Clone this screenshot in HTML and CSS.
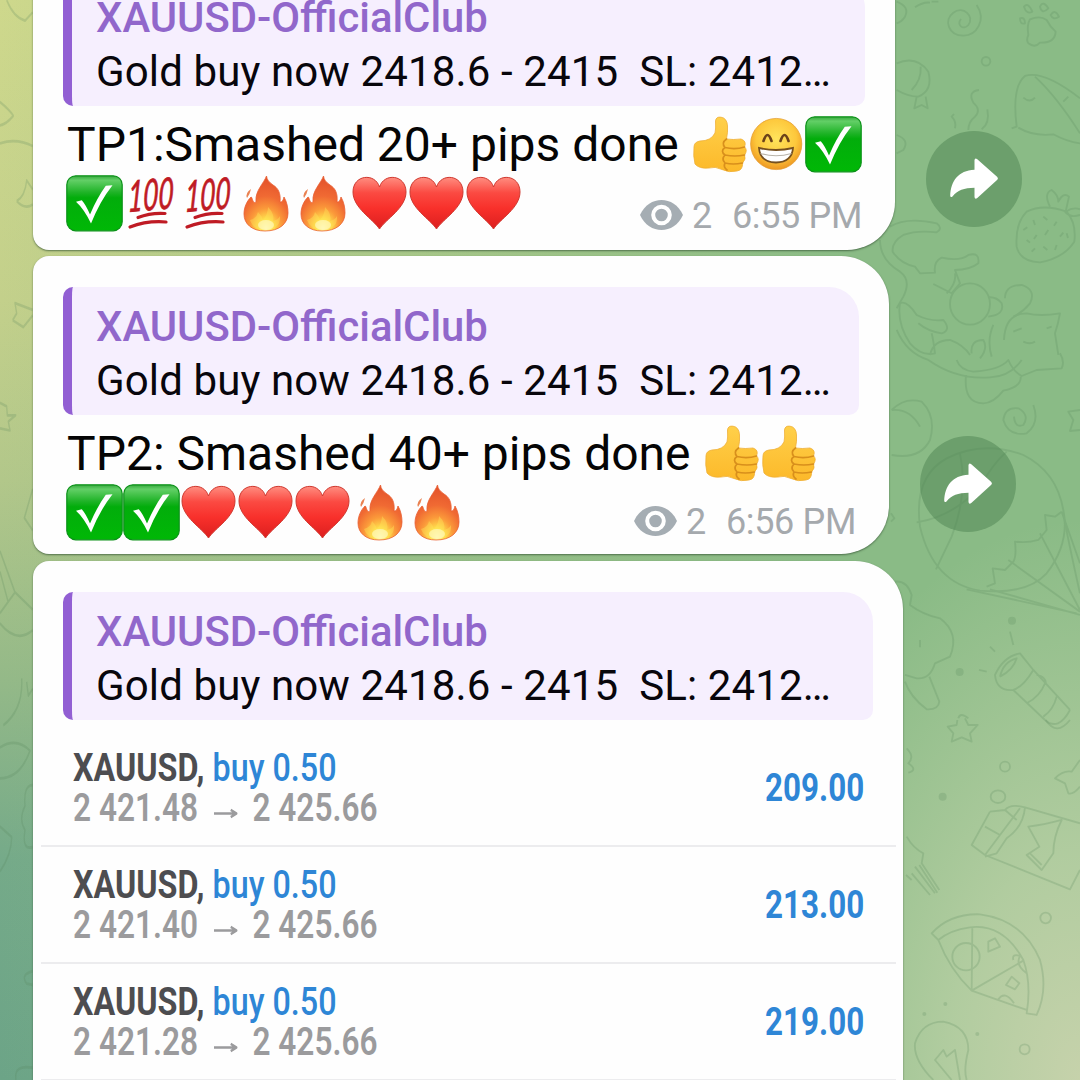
FILE: index.html
```html
<!DOCTYPE html>
<html lang="en">

<head>
    <meta charset="UTF-8">
    <title>XAUUSD-OfficialClub</title>
    <link rel="stylesheet" href="styles.css">
</head>

<body>
<!-- shared shapes -->
<svg class="defs" width="0" height="0">
    <defs>
        <linearGradient id="gCheck" x1="0" y1="0" x2="0" y2="1">
            <stop offset="0" stop-color="#36a83d"/>
            <stop offset=".08" stop-color="#63cf67"/>
            <stop offset=".3" stop-color="#1fb327"/>
            <stop offset=".4" stop-color="#02ad0b"/>
            <stop offset="1" stop-color="#00b806"/>
        </linearGradient>
        <linearGradient id="gHeart" x1="0" y1="0" x2="0" y2="1">
            <stop offset="0" stop-color="#ff8d80"/>
            <stop offset=".3" stop-color="#fb4a42"/>
            <stop offset=".6" stop-color="#f8302b"/>
            <stop offset="1" stop-color="#dc1f1f"/>
        </linearGradient>
        <radialGradient id="gFire" cx=".5" cy=".95" r=".9">
            <stop offset="0" stop-color="#fffbb0"/>
            <stop offset=".18" stop-color="#ffe14d"/>
            <stop offset=".4" stop-color="#fb9a3a"/>
            <stop offset=".65" stop-color="#f06a33"/>
            <stop offset="1" stop-color="#e4532b"/>
        </radialGradient>
        <linearGradient id="gThumb" x1="0" y1="0" x2="0" y2="1">
            <stop offset="0" stop-color="#ffd04a"/>
            <stop offset="1" stop-color="#fcb92a"/>
        </linearGradient>
        <radialGradient id="gFace" cx=".5" cy=".4" r=".6">
            <stop offset="0" stop-color="#ffe45c"/>
            <stop offset=".65" stop-color="#fdc83c"/>
            <stop offset="1" stop-color="#ee9722"/>
        </radialGradient>
    </defs>
    <symbol id="check" viewBox="0 0 57 57">
        <rect x=".8" y=".8" width="55.4" height="55" rx="9" fill="url(#gCheck)" stroke="#0c9219" stroke-width="1.2"/>
        <path d="M10 26.8L15.8 25.2Q20 30 24 39.5Q31 23 39.8 10.8L46.500 10.2Q34 26 25 48.500Q18 34 10 26.8Z" fill="#fff"/>
    </symbol>
    <symbol id="heart" viewBox="0 0 57 57">
        <path d="M28.5 54C22 44 2 33 2 17C2 -.5 24 -2.500 28.500 12C33 -2.500 55 -.5 55 17C55 33 35 44 28.500 54Z" fill="url(#gHeart)" stroke="#cf3930" stroke-width="1"/>
    </symbol>
    <symbol id="fire" viewBox="0 0 57 57">
        <path d="M29.500 1C27 8 18 16 19 26C19 28 17 28 16 26C15 24 15 22 14 22C10 26 7 32 7 39C7 49 15 56 28 56C42 56 51 49 51 38C51 33 50 27 47 22C46 26 45 27 43 27C44 18 41 13 36 10C32 7 30 5 29.500 1Z" fill="url(#gFire)" stroke="#e95f32" stroke-width=".8"/>
        <path d="M10 23Q8 18 14 14Q13 19 10 23Z" fill="#e98252"/>
        <path d="M13 45Q20 43 21 37Q25 41 26 45Q31 39 31 32Q38 39 36 46Q41 45 43 41Q44 54 29 55Q16 55 13 45Z" fill="#ffe75a" opacity=".4"/>
        <ellipse cx="29" cy="50" rx="8" ry="5" fill="#fffcd0" opacity=".6"/>
    </symbol>
    <symbol id="hundred" viewBox="0 0 57 57">
        <text class="hundred-text" x="8" y="35" textLength="46" lengthAdjust="spacingAndGlyphs" transform="rotate(-5 28 28) skewX(-7)">100</text>
        <path d="M15 42.500Q28 37.500 42 38.500" fill="none" stroke="#bf1b24" stroke-width="3.200" stroke-linecap="round"/>
        <path d="M7 52Q24 45.500 43 47" fill="none" stroke="#bf1b24" stroke-width="3.200" stroke-linecap="round"/>
    </symbol>
    <symbol id="thumb" viewBox="0 0 57 57">
        <path d="M3 31Q3 26 9 25Q20 25 24 17Q25 13 24.500 5Q25 .5 30 1.200Q36 2 36.500 10Q37 16 35.500 23Q42 24 50 23Q56 25 53.500 31Q57 34 53.500 39Q55.500 43 51.500 47Q52 54 46 55Q38 57 31 53.500Q24 50 18 52Q8 53 4 48Q2 40 3 31Z" fill="url(#gThumb)" stroke="#efae35" stroke-width=".8"/>
        <path d="M35.500 23Q30 27 34 31.500Q29 35 34 39Q30 43 34 47Q32 51 36 54M34 31.500Q44 34 53.500 31M34 39Q44 41 53.500 39M34 47Q42 49 51.500 47" fill="none" stroke="#d88f1c" stroke-width="1.700" stroke-linecap="round"/>
    </symbol>
    <symbol id="grin" viewBox="0 0 57 57">
        <circle cx="28.200" cy="28" r="25.600" fill="url(#gFace)" stroke="#e39a2b" stroke-width=".7"/>
        <path d="M15.500 25Q19.500 13 23.500 25M32.500 25Q36.500 13 40.500 25" fill="none" stroke="#6c431a" stroke-width="2.600" stroke-linecap="round"/>
        <path d="M11 32Q28 36 45 32Q44 46 28 46.500Q12 46 11 32Z" fill="#fff" stroke="#76501f" stroke-width="1.800"/>
        <path d="M12.500 37.500Q28 42 43.500 37.500" fill="none" stroke="#b9b4aa" stroke-width="1.200"/>
    </symbol>
    <symbol id="eye" viewBox="0 0 43 30">
        <path d="M0 15C9 -5 34 -5 43 15C34 35 9 35 0 15Z" fill="#a5adb3"/>
        <circle cx="21.500" cy="15" r="8.300" fill="#a5adb3" stroke="#fff" stroke-width="4"/>
    </symbol>
    <symbol id="share" viewBox="0 0 96 96">
        <path d="M48.500 29Q49 26.500 51 28L71.300 46Q72.600 47.400 71.300 48.800L51 67.300Q48.800 68.500 48.500 66V56.800C38 57 31.500 59 26.500 65.500Q24.300 67 24.200 64.500C25 50 32 39.500 48.500 38.700Z" fill="#fff"/>
    </symbol>
</svg>

<!-- wallpaper -->
<svg class="wallpaper" viewBox="0 0 1080 1080">
    <g class="doodle" transform="translate(880 0) scale(.3333)">
        <path d="M290 15C320 60 290 107 250 107C205 107 190 60 220 38C250 15 285 50 265 75C250 92 228 75 243 57"/>
        <path d="M50 5Q90 20 75 50Q65 65 50 70M105 22Q130 5 150 8M155 5L175 5"/>
        <path d="M445 105Q440 75 450 58Q480 45 500 60Q510 80 527 95Q525 130 480 128Q465 145 445 130Q438 120 445 105ZM432 20Q445 5 457 35Q440 45 432 20ZM480 20Q490 0 505 25Q485 45 480 20ZM512 45Q525 25 537 50Q520 62 512 45ZM420 55Q435 50 435 70Q420 75 420 55Z"/>
        <circle cx="318" cy="184" r="13"/>
        <path d="M50 190Q110 165 145 215Q160 270 115 290Q85 290 50 270M122 200Q125 240 95 270M110 290L103 325L125 315L143 325L137 290M50 405Q90 420 70 450L50 460"/>
        <path d="M265 390Q265 365 285 350Q305 330 280 308Q262 275 297 270M225 385Q230 365 215 350L222 342M305 388Q330 370 322 328"/>
        <path d="M395 385L410 380Q395 260 435 228Q490 210 600 295M465 230Q530 290 600 400M415 383Q460 410 520 403Q560 425 600 430M430 293Q450 310 465 293M550 305L565 290"/>
        <path d="M410 740Q405 670 440 635Q490 610 560 635Q590 670 583 725Q550 775 480 787Q420 785 410 740ZM510 620Q490 580 515 570Q535 585 535 605Q550 575 567 590L557 635Q580 620 600 628M555 635Q570 655 600 645"/>
        <path d="M430 690l12-8M460 660l5 15M490 650l12 10M530 665l-8 12M440 720l10 8M470 705l-8 12M505 690l-10 15M540 710l10-12M455 755l10-10M490 740l12 10M525 750l5-15M560 700l4 14"/>
        <path d="M30 680Q80 650 170 670Q190 685 170 697Q110 690 70 705Q35 725 38 755Q60 790 105 800L120 820L165 818Q160 785 185 773Q240 785 265 765Q300 755 295 790Q270 810 225 810L240 850L215 880L160 852M0 720Q0 780 60 815Q95 840 70 890L50 925"/>
        <ellipse cx="270" cy="912" rx="60" ry="62"/>
        <path d="M325 892Q350 890 365 910Q375 945 325 950M375 895Q375 855 425 855Q470 870 450 910Q430 935 400 950M372 1020Q375 940 440 940Q480 950 540 940Q535 970 525 1000L535 1065M340 975Q320 1020 335 1070M200 880Q230 850 225 820"/>
        <path d="M60 910Q80 900 110 945Q150 965 190 960Q215 990 185 1000Q145 995 115 970M60 910Q50 970 90 1030Q125 1070 165 1060Q160 1020 155 1000M150 1065Q160 1020 210 1020Q250 1035 270 1065M50 990Q80 1060 145 1080M275 1060Q270 1020 310 1020Q325 1045 300 1075M430 1025Q450 1035 465 1025M400 995L425 985M500 985L515 980"/>
    </g>
    <g class="doodle" transform="translate(880 360) scale(.3333)">
        <path d="M145 0Q230 60 330 52Q390 50 425 0M230 0Q240 30 280 35Q360 30 385 0Q400 35 425 48L470 30L545 25Q555 5 540 -20M258 45Q250 130 310 130Q340 130 370 92Q425 80 422 50"/>
        <path d="M460 135Q480 190 440 220Q385 230 370 180Q375 140 415 145Q450 165 430 195Q405 205 402 170"/>
        <path d="M600 150L565 155L580 180L570 213L600 210M35 150Q75 110 125 125Q170 170 150 240Q120 300 35 285M35 150Q90 145 120 200M33 460L43 475L33 485"/>
        <path d="M120 500Q100 350 200 295Q310 240 430 285Q530 335 550 450Q570 550 500 640Q440 705 300 692Q160 670 120 500ZM240 280Q265 400 215 530L168 628M380 275Q340 310 300 380Q220 470 110 487"/>
        <path d="M545 455L525 470L495 465L500 510L475 540Q440 550 405 545Q410 590 400 605L375 630L338 625L345 670L320 680M545 455L600 610M550 460Q560 520 600 700M480 520L600 750M385 600L600 755M260 688L590 760M330 688L600 765"/>
        <path d="M45 665Q80 660 95 705L90 735Q130 765 180 775Q240 820 210 890L165 910Q150 960 110 955L75 945M75 965Q90 1010 140 1048Q175 1050 178 1025L148 950"/>
        <path d="M345 945Q370 890 420 880L460 930Q430 980 400 990Q350 995 345 945ZM360 950Q370 905 410 895Q400 930 360 950M400 990L495 1080Q535 1115 570 1050M460 930L570 1050M470 945Q500 950 498 975M440 1030Q480 1010 495 970M490 1070Q520 1050 530 1010M235 1075Q240 1055 265 1075"/>
        <path d="M390 815L400 855M330 860L345 875M297 930L320 935M120 840V862"/>
        <circle class="dot" cx="396" cy="782" r="12"/>
        <circle class="dot" cx="239" cy="936" r="12"/>
    </g>
    <g class="doodle" transform="translate(880 720) scale(.3333)">
        <path d="M232 0L230 15L203 20L220 40L215 65L245 52L275 65L270 40L293 15L265 15L255 -5M497 0Q530 50 570 0M80 85Q105 110 85 130Q115 150 85 158"/>
        <circle cx="375" cy="140" r="15"/>
        <circle class="dot" cx="188" cy="230" r="12"/>
        <path d="M600 120L575 155Q550 150 525 175L555 190L565 220Q580 225 600 200"/>
        <ellipse cx="354" cy="230" rx="22" ry="19"/>
        <path d="M330 275L275 375L315 405L570 508L600 450M330 275L375 270Q390 250 435 262L600 310M435 262Q430 320 380 355L350 400L315 410M315 320L360 345L315 405M360 345L420 265M375 270L410 300M445 320Q490 315 545 300Q520 350 520 400L485 450L440 405L478 380L445 320ZM450 400L485 435"/>
        <path d="M80 350Q100 385 130 400L125 430L178 510M95 460L150 525M105 440L165 520M118 435L172 518M78 465L95 480"/>
        <circle cx="497" cy="594" r="16"/>
        <path d="M155 640Q210 580 300 583Q430 600 480 720Q505 810 470 885L440 880Q455 790 430 720Q370 610 270 622Q210 630 175 660ZM175 660Q210 750 275 812L440 870M277 622L275 812L430 722M325 665V695L360 680L345 655ZM378 795L395 770L418 790L405 808ZM355 838Q375 810 402 850M400 720Q395 700 420 708Q405 735 440 760"/>
        <circle cx="258" cy="710" r="41"/>
        <path d="M160 1080Q100 1020 105 970Q125 905 190 905Q265 920 265 990Q250 1050 260 1080M240 1080L225 990L200 1010L190 990L165 1020L215 1080"/>
        <circle cx="434" cy="988" r="15"/>
        <circle class="dot" cx="292" cy="942" r="6"/>
        <circle class="dot" cx="196" cy="852" r="6"/>
        <circle class="dot" cx="133" cy="882" r="6"/>
    </g>
    <g class="doodle doodle-left" transform="scale(.3333 .6888)">
        <path d="M20 0Q40 25 75 30L98 18M0 148Q30 160 40 168Q20 180 0 182M0 208Q50 200 98 212M50 292Q75 285 80 262L98 275M50 292Q75 305 98 297M38 465L50 455L45 440L98 450M38 465L70 475L98 458M0 585L20 590L22 603L47 603L25 612L30 625L0 622M98 710L73 752L98 770"/>
        <path d="M0 800L45 860L0 890M0 830L25 875M45 860L98 885M0 905Q50 935 98 915M65 985Q70 1030 10 1053M80 990L85 1010L98 1000M0 1085Q50 1070 90 1090Q60 1130 0 1130M98 1140Q70 1140 75 1170Q55 1190 75 1205Q65 1235 98 1230M0 1200L35 1215Q35 1240 0 1265M98 1410Q60 1415 80 1428L98 1430M98 1550Q40 1545 48 1568"/>
    </g>
</svg>

<main class="chat">
    <div class="message message-first">
        <div class="bubble">
            <div class="quote">
                <div class="quote-title">XAUUSD-OfficialClub</div>
                <div class="quote-text">Gold buy now 2418.6 - 2415&nbsp; SL: 2412…</div>
            </div>
            <div class="line">
                <span class="text">TP1:Smashed 20+ pips done</span>
                <svg class="emoji"><use href="#thumb"/></svg>
                <svg class="emoji"><use href="#grin"/></svg>
                <svg class="emoji"><use href="#check"/></svg>
            </div>
            <div class="line">
                <svg class="emoji"><use href="#check"/></svg>
                <svg class="emoji"><use href="#hundred"/></svg>
                <svg class="emoji"><use href="#hundred"/></svg>
                <svg class="emoji"><use href="#fire"/></svg>
                <svg class="emoji"><use href="#fire"/></svg>
                <svg class="emoji"><use href="#heart"/></svg>
                <svg class="emoji"><use href="#heart"/></svg>
                <svg class="emoji"><use href="#heart"/></svg>
                <div class="meta">
                    <svg class="eye"><use href="#eye"/></svg>
                    <span class="views">2</span>
                    <span class="time">6:55 PM</span>
                </div>
            </div>
        </div>
        <div class="share"><svg width="96" height="96"><use href="#share"/></svg></div>
    </div>

    <div class="message message-second">
        <div class="bubble">
            <div class="quote">
                <div class="quote-title">XAUUSD-OfficialClub</div>
                <div class="quote-text">Gold buy now 2418.6 - 2415&nbsp; SL: 2412…</div>
            </div>
            <div class="line">
                <span class="text">TP2: Smashed 40+ pips done</span>
                <svg class="emoji"><use href="#thumb"/></svg>
                <svg class="emoji"><use href="#thumb"/></svg>
            </div>
            <div class="line">
                <svg class="emoji"><use href="#check"/></svg>
                <svg class="emoji"><use href="#check"/></svg>
                <svg class="emoji"><use href="#heart"/></svg>
                <svg class="emoji"><use href="#heart"/></svg>
                <svg class="emoji"><use href="#heart"/></svg>
                <svg class="emoji"><use href="#fire"/></svg>
                <svg class="emoji"><use href="#fire"/></svg>
                <div class="meta">
                    <svg class="eye"><use href="#eye"/></svg>
                    <span class="views">2</span>
                    <span class="time">6:56 PM</span>
                </div>
            </div>
        </div>
        <div class="share"><svg width="96" height="96"><use href="#share"/></svg></div>
    </div>

    <div class="message message-third">
        <div class="bubble">
            <div class="quote">
                <div class="quote-title">XAUUSD-OfficialClub</div>
                <div class="quote-text">Gold buy now 2418.6 - 2415&nbsp; SL: 2412…</div>
            </div>
            <div class="trades">
                <div class="trade">
                    <div class="trade-info">
                        <div class="trade-name"><b>XAUUSD,</b> <span>buy 0.50</span></div>
                        <div class="trade-price"><span>2 421.48</span><svg class="arrow" viewBox="0 0 28 10"><path d="M0 5H26M20 1.500L27 5L20 8.500"/></svg><span>2 425.66</span></div>
                    </div>
                    <div class="profit">209.00</div>
                </div>
                <div class="trade">
                    <div class="trade-info">
                        <div class="trade-name"><b>XAUUSD,</b> <span>buy 0.50</span></div>
                        <div class="trade-price"><span>2 421.40</span><svg class="arrow" viewBox="0 0 28 10"><path d="M0 5H26M20 1.500L27 5L20 8.500"/></svg><span>2 425.66</span></div>
                    </div>
                    <div class="profit">213.00</div>
                </div>
                <div class="trade">
                    <div class="trade-info">
                        <div class="trade-name"><b>XAUUSD,</b> <span>buy 0.50</span></div>
                        <div class="trade-price"><span>2 421.28</span><svg class="arrow" viewBox="0 0 28 10"><path d="M0 5H26M20 1.500L27 5L20 8.500"/></svg><span>2 425.66</span></div>
                    </div>
                    <div class="profit">219.00</div>
                </div>
            </div>
        </div>
    </div>
</main>
</body>

</html>
```

FILE: styles.css
```css
* {
    box-sizing: border-box;
}

body {
    position: relative;
    width: 1080px;
    height: 1080px;
    margin: 0;
    overflow: hidden;
    font-family: 'Roboto', sans-serif;
    background:
        radial-gradient(ellipse 330px 560px at 100% 100%, #c6d2ab 0%, rgba(190, 210, 168, .75) 40%, transparent 100%),
        linear-gradient(90deg, transparent 0, rgba(137, 187, 133, .6) 500px, #8abb86 850px),
        linear-gradient(180deg, #ced88c 0, #c3d08b 300px, #b2c78a 480px, #94b988 680px, #75aa89 860px, #6ca487 1080px);
}

.defs {
    position: absolute;
}

.wallpaper {
    position: absolute;
    top: 0;
    left: 0;
    width: 1080px;
    height: 1080px;
}

.doodle {
    fill: none;
    stroke: #56865a;
    stroke-width: 5.5;
    stroke-linejoin: round;
    opacity: .22;
}

.doodle-left {
    stroke-width: 4;
}

.doodle .dot {
    fill: #56865a;
    stroke: none;
}

.chat {
    position: relative;
    display: flex;
    flex-direction: column;
    gap: 6px;
    height: 1080px;
    padding-left: 33px;
    overflow: hidden;
}

.message {
    display: flex;
    flex-shrink: 0;
    align-items: flex-end;
    gap: 30.5px;
}

.message-first {
    height: 303px;
    margin-top: -53px;
}

.message-second {
    height: 298px;
}

.message-third {
    height: 600px;
    margin-top: 1px;
}

.bubble {
    height: 100%;
    padding: 31px 30px 0;
    background: #fefefe;
    border-radius: 16px 48px 48px 16px;
    box-shadow: 0 1px 2px rgba(50, 80, 50, .7);
}

.message-first .bubble {
    width: 862px;
}

.message-second .bubble {
    width: 856px;
}

.message-third .bubble {
    width: 870px;
}

.quote {
    height: 128px;
    padding: 12px 0 0 24px;
    overflow: hidden;
    background: #f6effe;
    border-left: 9px solid #925fd3;
    border-radius: 10px 30px 10px 10px;
    white-space: nowrap;
}

.quote-title {
    font-size: 41.8px;
    font-weight: 500;
    line-height: 55px;
    color: #9167cb;
}

.quote-text {
    font-size: 42px;
    line-height: 54px;
    letter-spacing: .12px;
    color: #08060c;
}

.line {
    display: flex;
    align-items: center;
    width: 800px;
    height: 59px;
    margin-left: 3px;
}

.quote + .line {
    margin-top: 9px;
}

.text {
    margin: 0 12.5px 0 1px;
    font-size: 48px;
    line-height: 58px;
    white-space: nowrap;
    color: #050505;
}

.emoji {
    flex: none;
    width: 57px;
    height: 57px;
}

.hundred-text {
    font-family: 'Lato', sans-serif;
    font-size: 43px;
    font-style: italic;
    font-weight: 400;
    fill: #bf1b24;
    stroke: #bf1b24;
    stroke-width: .8px;
}

.meta {
    display: flex;
    align-items: center;
    height: 42px;
    margin: 24px 4px 0 auto;
    font-size: 36px;
    letter-spacing: -.35px;
    white-space: nowrap;
    color: #a5a9ad;
}

.message-second .meta {
    margin-top: 18px;
    margin-right: 10px;
}

.eye {
    width: 43px;
    height: 30px;
    margin: 0 9px 2px 0;
}

.views {
    margin-right: 20px;
}

.share {
    width: 96px;
    height: 96px;
    margin-bottom: 23px;
    border-radius: 50%;
    background: rgba(77, 131, 81, .5);
}

.message-second .share {
    margin-bottom: 22px;
}

.trades {
    margin: 10px -23px 0 -22px;
}

.trade {
    display: flex;
    justify-content: space-between;
    align-items: center;
    height: 117px;
    padding: 0 32px;
    border-bottom: 2px solid #ececee;
}

.trade-info {
    font-size: 39px;
    line-height: 40px;
    white-space: nowrap;
}

/* condensed look of the trading app font */
.trade-name {
    transform: scaleX(.828);
    transform-origin: left;
}

.trade-name b {
    color: #4d4d50;
}

.trade-name span {
    font-weight: 500;
    color: #2e86d6;
}

.trade-price {
    display: flex;
    align-items: center;
    transform: scaleX(.81);
    transform-origin: left;
    font-weight: 600;
    color: #9b9b9d;
}

.arrow {
    width: 29px;
    height: 11px;
    margin: 12px 18px 0 20px;
    fill: none;
    stroke: #9b9b9d;
    stroke-width: 2.5;
}

.profit {
    transform: scaleX(.805);
    transform-origin: right;
    font-size: 39px;
    font-weight: 700;
    color: #2e86d6;
}
```
